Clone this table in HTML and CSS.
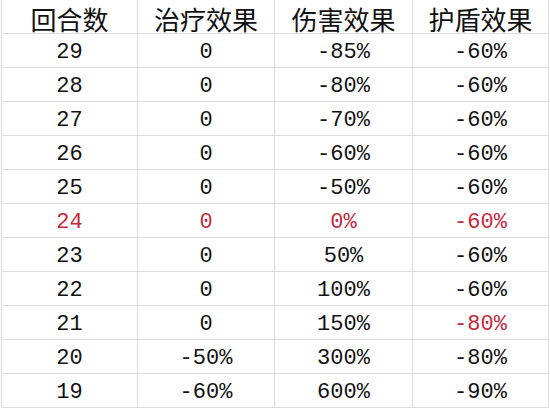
FILE: index.html
```html
<!DOCTYPE html>
<html lang="zh">
<head>
<meta charset="utf-8">
<link rel="stylesheet" href="styles.css">
</head>
<body>
<table class="grid">
  <colgroup>
    <col class="c1"><col class="c2"><col class="c3"><col class="c4">
  </colgroup>
  <thead>
    <tr><th>回合数</th><th>治疗效果</th><th>伤害效果</th><th>护盾效果</th></tr>
  </thead>
  <tbody>
    <tr><td>29</td><td>0</td><td>-85%</td><td>-60%</td></tr>
    <tr><td>28</td><td>0</td><td>-80%</td><td>-60%</td></tr>
    <tr><td>27</td><td>0</td><td>-70%</td><td>-60%</td></tr>
    <tr><td>26</td><td>0</td><td>-60%</td><td>-60%</td></tr>
    <tr><td>25</td><td>0</td><td>-50%</td><td>-60%</td></tr>
    <tr class="red"><td>24</td><td>0</td><td>0%</td><td>-60%</td></tr>
    <tr><td>23</td><td>0</td><td>50%</td><td>-60%</td></tr>
    <tr><td>22</td><td>0</td><td>100%</td><td>-60%</td></tr>
    <tr><td>21</td><td>0</td><td>150%</td><td class="red">-80%</td></tr>
    <tr><td>20</td><td>-50%</td><td>300%</td><td>-80%</td></tr>
    <tr><td>19</td><td>-60%</td><td>600%</td><td>-90%</td></tr>
  </tbody>
</table>
</body>
</html>
```
FILE: styles.css
```css
html, body {
  margin: 0;
  padding: 0;
  background: #ffffff;
}
.grid {
  border-collapse: collapse;
  table-layout: fixed;
  width: 547px;
  margin-left: 1px;
  color: #111111;
}
.c1 { width: 136px; }
.c2 { width: 137px; }
.c3 { width: 138px; }
.c4 { width: 136px; }
.grid th,
.grid td {
  padding: 4px 0 0 0;
  height: 29px;
  line-height: 29px;
  text-align: center;
  border: 1px solid #dcdcdc;
  border-top: none;
  white-space: nowrap;
  box-sizing: content-box;
}
.grid th {
  font-family: "Noto Sans CJK SC", "Noto Sans", sans-serif;
  font-weight: 400;
  font-size: 26px;
  padding-top: 4px;
  height: 29px;
  line-height: 29px;
  color: #111;
}
.grid td {
  font-family: "Liberation Mono", "DejaVu Sans Mono", monospace;
  font-size: 22px;
}
.grid tr.red td,
.grid td.red {
  color: #c8283c;
}
```
